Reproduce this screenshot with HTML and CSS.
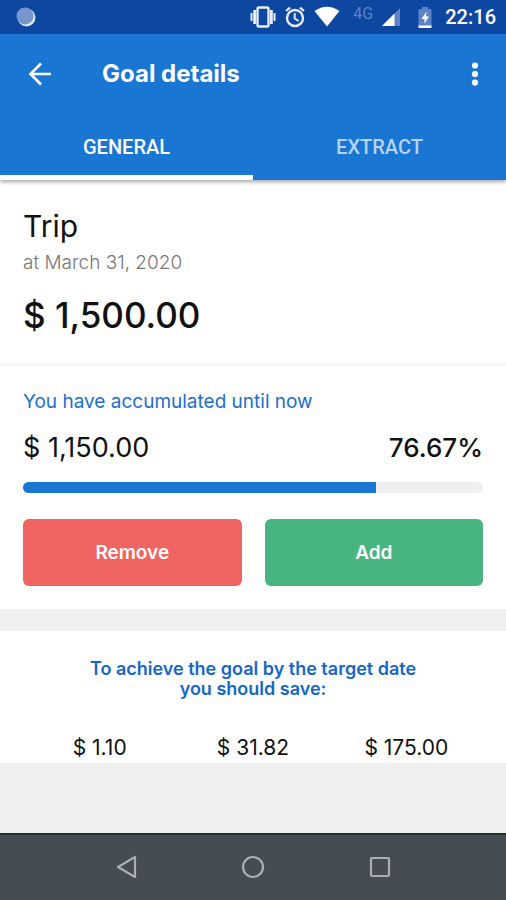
FILE: index.html
```html
<!DOCTYPE html>
<html lang="en">
<head>
<meta charset="utf-8">
<meta name="viewport" content="width=device-width, initial-scale=1">
<title>Goal details</title>
<link rel="stylesheet" href="styles.css">
</head>
<body>
<div class="status">
  <svg class="sync" width="20" height="20" viewBox="0 0 20 20" aria-hidden="true">
    <circle cx="10.5" cy="10.5" r="9" fill="#d5e5f5"/><circle cx="9" cy="9" r="8.5" fill="#7895cd"/>
  </svg>
  <div class="status-icons">
    <svg width="26" height="22" viewBox="0 0 26 22" fill="none" stroke="#e8edfb" aria-hidden="true">
      <rect x="7.5" y="1.5" width="11" height="19" rx="1.5" stroke-width="2.4"/>
      <path d="M4.600 4v14M21.400 4v14" stroke-width="2.800"/><path d="M1.500 7v8M24.500 7v8" stroke-width="2"/>
    </svg>
    <svg width="20" height="22" viewBox="0 0 20 22" fill="none" stroke="#e8edfb" aria-hidden="true">
      <circle cx="10" cy="12" r="8" stroke-width="2.4"/><path d="M9.7 7v5.5l4 2.5" stroke-width="1.9"/><path d="M1 5l4-3.4M19 5l-4-3.4" stroke-width="2.2"/>
    </svg>
    <svg width="26" height="22" viewBox="0 0 26 22" aria-hidden="true">
      <path d="M.5 5Q13-3.5 25.5 5L13 20.5z" fill="#fff"/>
    </svg>
    <span class="network">4G</span>
    <svg class="signal" width="18" height="18" viewBox="0 0 18 18" aria-hidden="true">
      <path d="M18 0v18H0z" fill="#5f82c6"/><path d="M12.500 5.500V18H0z" fill="#fff"/>
    </svg>
    <svg class="battery" width="14" height="21" viewBox="0 0 14 21" aria-hidden="true">
      <path d="M4 0h6v2h2.500q1 0 1 1v17q0 1-1 1h-11q-1 0-1-1V3q0-1 1-1H4z" fill="#5f82c6"/>
      <path d="M.5 18.500h13V20q0 1-1 1h-11q-1 0-1-1z" fill="#fff"/><path d="M8.500 4.500L3.500 12h3v4.500L11 9.500H8z" fill="#fff"/>
    </svg>
    <time class="clock">22:16</time>
  </div>
</div>

<header class="header">
  <div class="appbar">
    <button class="icon-button" type="button" aria-label="Back">
      <svg width="24" height="24" viewBox="0 0 24 24" fill="none" stroke="#fff" stroke-width="2.600"><path d="M23 12H2.500M13 1.500L2.500 12 13 22.500"/></svg>
    </button>
    <h1 class="title">Goal details</h1>
    <button class="icon-button" type="button" aria-label="More options">
      <svg width="8" height="24" viewBox="0 0 8 24" fill="#fff"><circle cx="4" cy="3.500" r="3.100"/><circle cx="4" cy="12" r="3.100"/><circle cx="4" cy="20.500" r="3.100"/></svg>
    </button>
  </div>
  <div class="tabs" role="tablist">
    <button class="tab active" type="button" role="tab" aria-selected="true">GENERAL</button>
    <button class="tab" type="button" role="tab" aria-selected="false">EXTRACT</button>
  </div>
</header>

<main class="content">
  <section class="card goal">
    <h2 class="goal-name">Trip</h2>
    <p class="goal-date">at March 31, 2020</p>
    <p class="goal-amount">$ 1,500.00</p>
  </section>
  <section class="card progress-card">
    <h2 class="caption">You have accumulated until now</h2>
    <div class="totals"><span>$ 1,150.00</span><strong class="percent">76.67%</strong></div>
    <div class="track" role="progressbar" aria-valuenow="76.67" aria-valuemin="0" aria-valuemax="100"><div class="fill" style="width:76.67%"></div></div>
    <div class="actions">
      <button class="action remove" type="button">Remove</button>
      <button class="action add" type="button">Add</button>
    </div>
  </section>
  <section class="card plan">
    <h2 class="plan-title">To achieve the goal by the target date<br>you should save:</h2>
    <div class="amounts"><span>$ 1.10</span><span>$ 31.82</span><span>$ 175.00</span></div>
  </section>
</main>

<nav class="navbar">
  <button class="nav-button" type="button" aria-label="Back"><svg width="24" height="24" viewBox="0 0 24 24"><path d="M20 2v20L3 12z"/></svg></button>
  <button class="nav-button" type="button" aria-label="Home"><svg width="24" height="24" viewBox="0 0 24 24"><circle cx="12" cy="12" r="10"/></svg></button>
  <button class="nav-button" type="button" aria-label="Recent apps"><svg width="24" height="24" viewBox="0 0 24 24"><rect x="3" y="3" width="18" height="18" rx="1"/></svg></button>
</nav>
</body>
</html>
```
FILE: styles.css
```css
* { box-sizing: border-box; }

body {
  margin: 0;
  min-height: 100vh;
  display: flex;
  flex-direction: column;
  background: #efefef;
  color: #111;
  font-family: Inter, "Open Sans", sans-serif;
}

h1, h2, p { margin: 0; font-weight: 400; }
button { border: 0; padding: 0; background: none; color: inherit; font-family: inherit; }
svg { display: block; flex: none; }

.status {
  display: flex;
  align-items: center;
  justify-content: space-between;
  height: 34px;
  padding: 0 10px 0 16px;
  background: #0d47a1;
  color: #fff;
  font-family: Roboto, sans-serif;
}
.status-icons { display: flex; align-items: center; gap: 9px; }
.network { align-self: flex-start; margin-left: 4px; font-size: 16px; line-height: 18px; color: #5f82c6; }
.battery { margin-left: 9px; }
.clock { margin-left: 4px; font-size: 20px; line-height: 24px; font-weight: 500; }

.header {
  position: relative;
  background: #1976d2;
  color: #fff;
  box-shadow: 0 2px 4px rgba(0, 0, 0, 0.35);
}
.appbar { display: flex; align-items: center; height: 80px; padding: 0 14px; }
.icon-button { display: flex; align-items: center; justify-content: center; width: 52px; height: 52px; }
.icon-button:last-child { width: 34px; }
.title { flex: 1; padding-left: 36px; font-size: 24px; line-height: 32px; font-weight: 700; }
.tabs { display: flex; }
.tab {
  flex: 1;
  height: 66px;
  padding-top: 5px;
  border-bottom: 5px solid transparent;
  font: 500 20px/24px Roboto, sans-serif;
  color: #b4d3f5;
}
.tab.active { border-color: #fff; color: #fff; }

.content { flex: 1; }
.card { padding: 0 23px; background: #fff; }

.goal { padding-top: 28px; padding-bottom: 24px; border-bottom: 3px solid #f7f7f7; }
.goal-name { font-size: 30px; line-height: 36px; }
.goal-date { font-size: 19px; line-height: 38px; font-weight: 300; color: #777; }
.goal-amount { margin-top: 9px; font-size: 35px; line-height: 48px; font-weight: 500; }

.progress-card { padding-top: 24px; padding-bottom: 23px; }
.caption { font-size: 19px; line-height: 24px; color: #1b6fce; }
.totals { display: flex; justify-content: space-between; margin-top: 16px; font-size: 27px; line-height: 36px; }
.percent { font-size: 26px; font-weight: 500; }
.track { height: 11px; margin-top: 16px; overflow: hidden; border-radius: 6px; background: #efefef; }
.fill { height: 100%; background: #1976d2; }
.actions { display: grid; grid-template-columns: 1fr 1fr; gap: 23px; margin-top: 26px; }
.action { height: 67px; border-radius: 6px; font-size: 19px; font-weight: 600; color: #fff; }
.remove { background: #f06461; }
.add { background: #48b581; }

.plan { margin-top: 22px; padding-top: 28px; text-align: center; }
.plan-title { font-size: 18px; line-height: 20px; font-weight: 600; color: #1467c8; }
.amounts { display: grid; grid-template-columns: repeat(3, 1fr); margin-top: 34px; font-size: 21px; line-height: 30px; }

.navbar {
  display: flex;
  justify-content: center;
  height: 67px;
  padding-bottom: 2px;
  border-top: 2px solid #1f3033;
  background: #464d52;
}
.nav-button { display: flex; align-items: center; justify-content: center; width: 25%; }
.nav-button svg { fill: none; stroke: #a8b0b3; stroke-width: 2.200; stroke-linejoin: round; }
```
